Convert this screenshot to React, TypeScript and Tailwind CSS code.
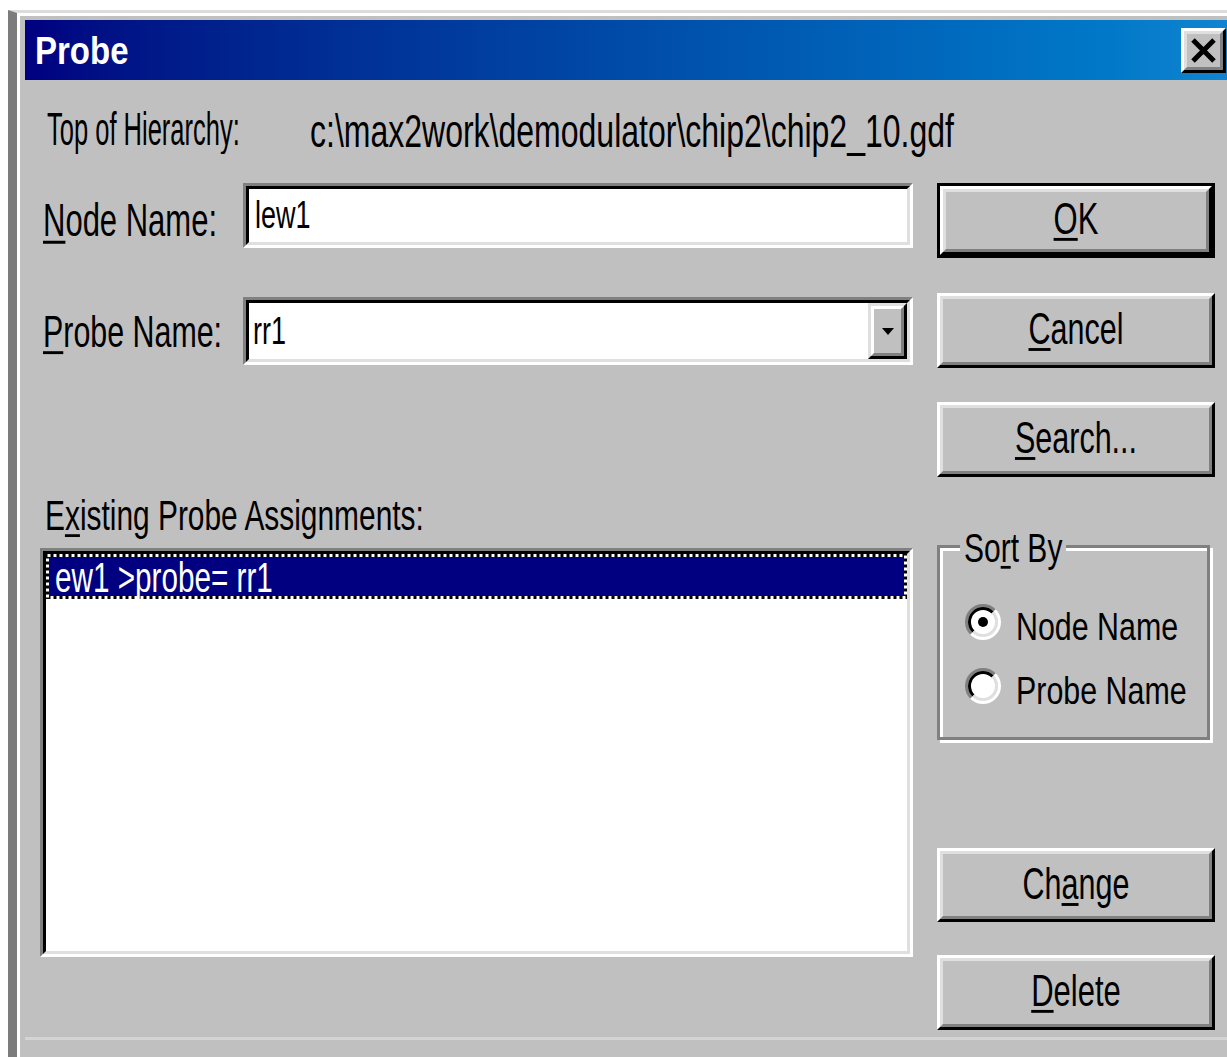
import clsx from "clsx";
import type { ReactNode } from "react";

// Stretched dialog text: widths come from the font size, the tall look from scale-y.
function Label({ children, className }: { children: ReactNode; className?: string }) {
  return <span className={clsx("inline-block whitespace-nowrap leading-none", className)}>{children}</span>;
}

function Key({ children }: { children: ReactNode }) {
  return <span className="underline decoration-2 underline-offset-[3px]">{children}</span>;
}

function Sunken({ children, className }: { children?: ReactNode; className?: string }) {
  return (
    <div className={clsx("border-[3px] border-t-[#808080] border-l-[#808080] border-r-white border-b-white", className)}>
      <div className="h-full border-[3px] border-t-black border-l-black border-r-[#dfdfdf] border-b-[#dfdfdf] bg-white">
        {children}
      </div>
    </div>
  );
}

function Button({ children, isDefault, className }: { children: ReactNode; isDefault?: boolean; className?: string }) {
  const face = (
    <div className="h-full border-[3px] border-t-white border-l-white border-r-black border-b-black">
      <div className="flex h-full items-center justify-center border-[3px] border-t-[#dfdfdf] border-l-[#dfdfdf] border-r-[#808080] border-b-[#808080] bg-[#c0c0c0] pb-[4px]">
        {children}
      </div>
    </div>
  );
  if (isDefault) return <div className={clsx("bg-black p-[3px]", className)}>{face}</div>;
  return <div className={className}>{face}</div>;
}

function Radio({ checked, children }: { checked?: boolean; children: ReactNode }) {
  return (
    <div className="flex h-[42px] items-center gap-[15px]">
      <svg width="36" height="36" viewBox="0 0 36 36">
        <circle cx="18" cy="18" r="15" fill="#ffffff" />
        <path d="M6.33 29.67 A16.5 16.5 0 0 1 29.67 6.33" stroke="#808080" strokeWidth="3" fill="none" />
        <path d="M29.67 6.33 A16.5 16.5 0 0 1 6.33 29.67" stroke="#ffffff" strokeWidth="3" fill="none" />
        <path d="M8.45 27.55 A13.5 13.5 0 0 1 27.55 8.45" stroke="#000000" strokeWidth="3" fill="none" />
        <path d="M27.55 8.45 A13.5 13.5 0 0 1 8.45 27.55" stroke="#dfdfdf" strokeWidth="3" fill="none" />
        {checked && <circle cx="18" cy="18" r="5" fill="#000000" />}
      </svg>
      <Label className="mt-[8px] text-[30.4px] scale-y-[1.3]">{children}</Label>
    </div>
  );
}

export default function App() {
  return (
    <div className="h-[1057px] w-[1227px] overflow-hidden bg-white pl-[8px] pt-[10px] font-['Liberation_Sans',Arial,sans-serif] text-black">
      <div className="h-full border-t-[3px] border-l-[9px] border-t-[#dcdcdc] border-l-[#7c7c7c]">
        <div className="flex h-full flex-col border-t-[3px] border-l-[3px] border-white bg-[#c0c0c0] pl-[5px] pt-[4px]">
          {/* title bar */}
          <div className="flex h-[60px] shrink-0 items-center justify-between bg-linear-to-r from-[#000080] to-[#1084d0] pl-[10px]">
            <Label className="text-[33px] font-bold text-white scale-y-[1.19]">Probe</Label>
            <div className="mr-[1px] h-[45px] w-[45px] border-[3px] border-t-white border-l-white border-r-black border-b-black">
              <div className="flex h-full items-center justify-center border-[3px] border-t-[#dfdfdf] border-l-[#dfdfdf] border-r-[#808080] border-b-[#808080] bg-[#c0c0c0]">
                <svg width="25" height="25" viewBox="0 0 25 25">
                  <path d="M2 2 L23 23 M23 2 L2 23" stroke="#000000" strokeWidth="5" />
                </svg>
              </div>
            </div>
          </div>

          <div className="h-[960px] shrink-0 border-b-[3px] border-[#d4d4d4] pl-[15px]">
            <div className="mt-[26px] flex h-[50px] items-center pl-[7px]">
              <div className="w-[263px]">
                <Label className="text-[25.5px] scale-y-[1.8]">Top of Hierarchy:</Label>
              </div>
              <Label className="text-[32px] scale-y-[1.44]">{"c:\\max2work\\demodulator\\chip2\\chip2_10.gdf"}</Label>
            </div>

            <div className="mt-[27px] flex gap-[24px]">
              <div className="flex w-[873px] flex-col">
                <div className="flex h-[65px]">
                  <div className="flex w-[203px] items-center pl-[3px] pt-[9px]">
                    <Label className="text-[31px] scale-y-[1.5]">
                      <Key>N</Key>ode Name:
                    </Label>
                  </div>
                  <Sunken className="w-[670px]">
                    <div className="flex h-full items-center pl-[6px]">
                      <Label className="text-[27px] scale-y-[1.45]">lew1</Label>
                    </div>
                  </Sunken>
                </div>

                <div className="mt-[49px] flex h-[68px]">
                  <div className="flex w-[203px] items-center pl-[3px]">
                    <Label className="text-[30.4px] scale-y-[1.45]">
                      <Key>P</Key>robe Name:
                    </Label>
                  </div>
                  <Sunken className="w-[670px]">
                    <div className="flex h-full items-center pl-[4px]">
                      <Label className="text-[27px] scale-y-[1.45]">rr1</Label>
                      <div className="ml-auto h-full w-[39px] border-[3px] border-t-[#dfdfdf] border-l-[#dfdfdf] border-r-black border-b-black">
                        <div className="flex h-full items-center justify-center border-[3px] border-t-white border-l-white border-r-[#808080] border-b-[#808080] bg-[#c0c0c0]">
                          <svg width="12" height="7" viewBox="0 0 12 7">
                            <path d="M0 0 H12 L6 7 Z" fill="#000000" />
                          </svg>
                        </div>
                      </div>
                    </div>
                  </Sunken>
                </div>

                <div className="mt-[131px] flex h-[40px] items-center pl-[5px]">
                  <Label className="text-[29.9px] scale-y-[1.4]">
                    E<Key>x</Key>isting Probe Assignments:
                  </Label>
                </div>

                <Sunken className="mt-[12px] h-[409px]">
                  <div className="relative h-[45px] bg-[#000080]">
                    <svg className="absolute inset-0" width="861" height="45">
                      <rect x="1.5" y="1.5" width="858" height="42" fill="none" stroke="#000000" strokeWidth="3" />
                      <rect x="1.5" y="1.5" width="858" height="42" fill="none" stroke="#ffffff" strokeWidth="3" strokeDasharray="3 3" />
                    </svg>
                    <div className="flex h-full items-center pl-[9px]">
                      <Label className="text-[29.7px] text-white scale-y-[1.45]">ew1 &gt;probe= rr1</Label>
                    </div>
                  </div>
                </Sunken>
              </div>

              <div className="flex w-[278px] flex-col">
                <Button isDefault className="h-[75px]">
                  <Label className="text-[31px] scale-y-[1.44]">
                    <Key>O</Key>K
                  </Label>
                </Button>
                <Button className="mt-[35px] h-[75px]">
                  <Label className="text-[30.5px] scale-y-[1.44]">
                    <Key>C</Key>ancel
                  </Label>
                </Button>
                <Button className="mt-[34px] h-[75px]">
                  <Label className="text-[30.5px] scale-y-[1.44]">
                    <Key>S</Key>earch...
                  </Label>
                </Button>

                <div className="relative mt-[68px] h-[195px] w-[273px] border-[3px] border-[#808080] pl-[25px] pt-[53px] shadow-[inset_3px_3px_0_#ffffff,3px_3px_0_#ffffff]">
                  <Label className="absolute left-[20px] top-[-15px] bg-[#c0c0c0] px-[4px] text-[30px] scale-y-[1.38]">
                    So<Key>r</Key>t By
                  </Label>
                  <Radio checked>Node Name</Radio>
                  <div className="mt-[22px]">
                    <Radio>Probe Name</Radio>
                  </div>
                </div>

                <Button className="mt-[108px] h-[74px]">
                  <Label className="text-[30.5px] scale-y-[1.44]">
                    Ch<Key>a</Key>nge
                  </Label>
                </Button>
                <Button className="mt-[33px] h-[75px]">
                  <Label className="text-[31px] scale-y-[1.44]">
                    <Key>D</Key>elete
                  </Label>
                </Button>
              </div>
            </div>
          </div>
        </div>
      </div>
    </div>
  );
}
